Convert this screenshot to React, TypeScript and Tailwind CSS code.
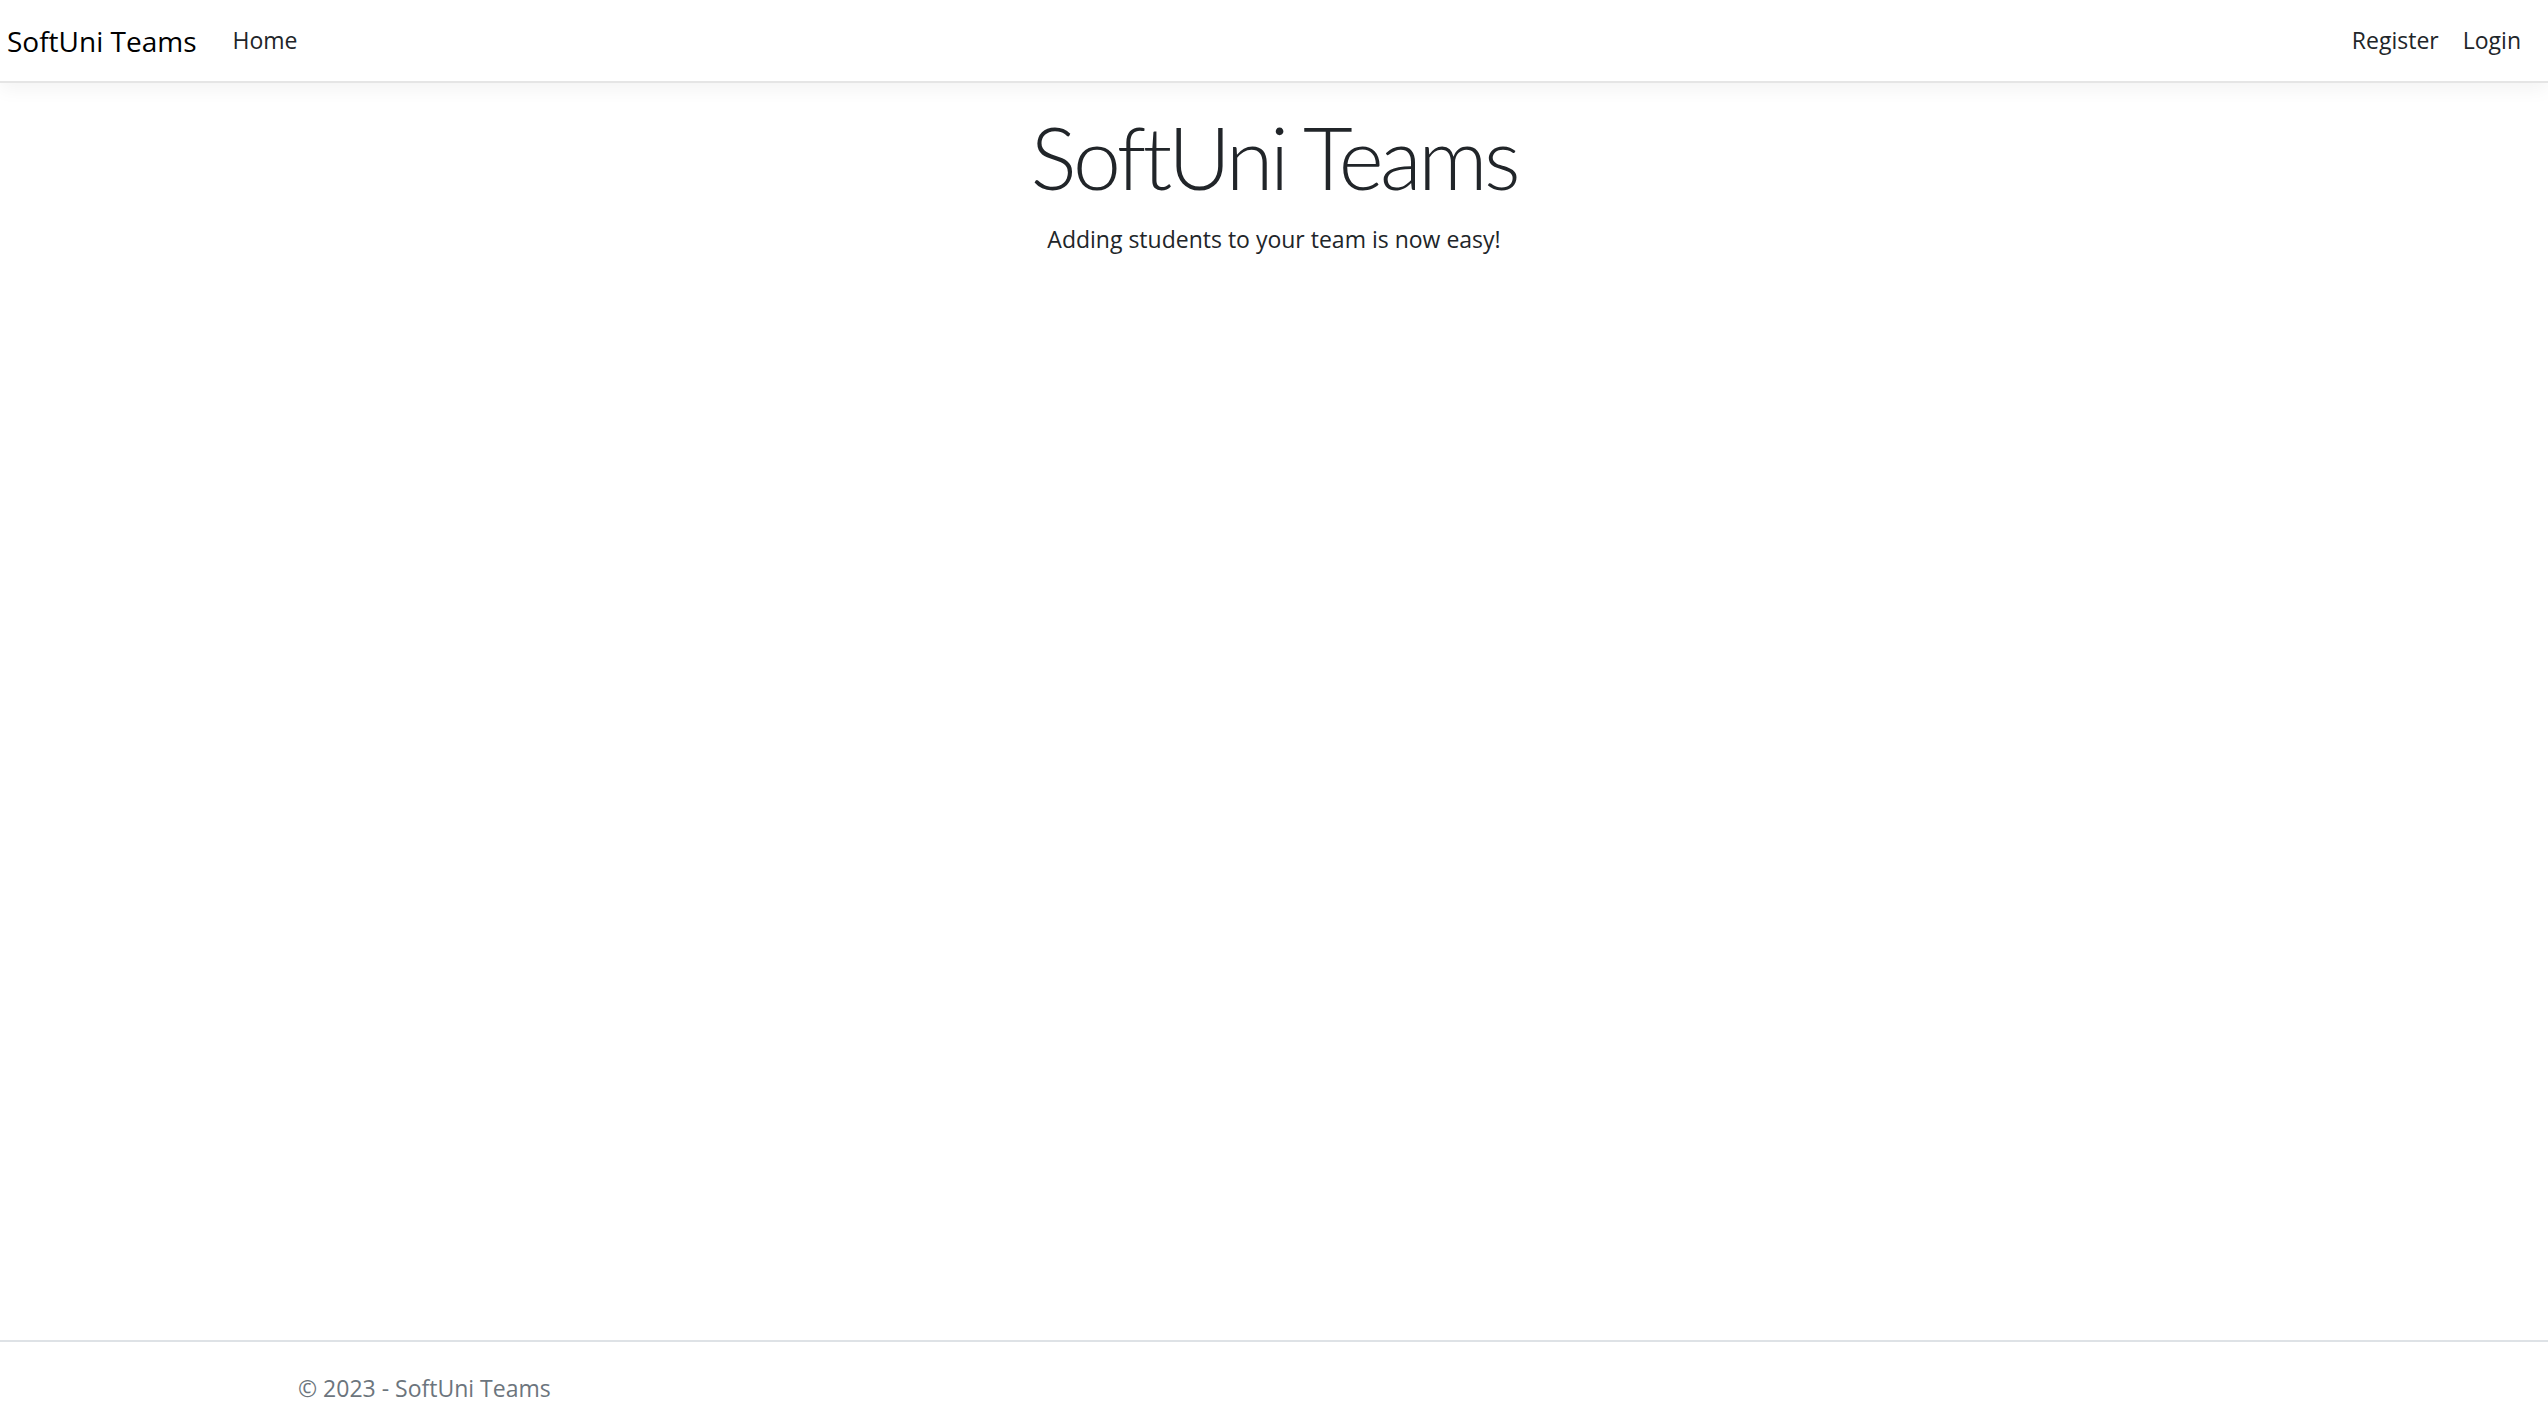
import React from "react";

const App: React.FC = () => {
  return (
    <div className="min-h-screen flex flex-col bg-white text-[#212529] font-['Open_Sans',_'Noto_Sans',_sans-serif]">
      <header className="h-[83px] border-b-2 border-[#e5e5e5] shadow-[0_6px_18px_rgba(0,0,0,0.05)] flex items-center justify-between pl-[7px] pr-[27px]">
        <div className="flex items-center">
          <a className="text-[28px] text-black leading-none">SoftUni Teams</a>
          <a className="ml-[36px] text-[23px] text-[#212529] leading-none">Home</a>
        </div>
        <div className="flex items-center gap-[24px] text-[23px] leading-none">
          <a>Register</a>
          <a>Login</a>
        </div>
      </header>

      <main className="flex-1 pt-[22px]">
        <div className="text-center">
          <h1 className="font-['Lato',_sans-serif] text-[86px] font-light leading-[1.2] tracking-[-0.04em]">SoftUni Teams</h1>
          <p className="text-[23px] mt-[14px]">Adding students to your team is now easy!</p>
        </div>
      </main>

      <footer className="h-[86px] border-t-2 border-[#dee2e6] flex items-center pl-[298px] pt-[8px] text-[23px] text-[#6c757d]">
        © 2023 - SoftUni Teams
      </footer>
    </div>
  );
};

export default App;
